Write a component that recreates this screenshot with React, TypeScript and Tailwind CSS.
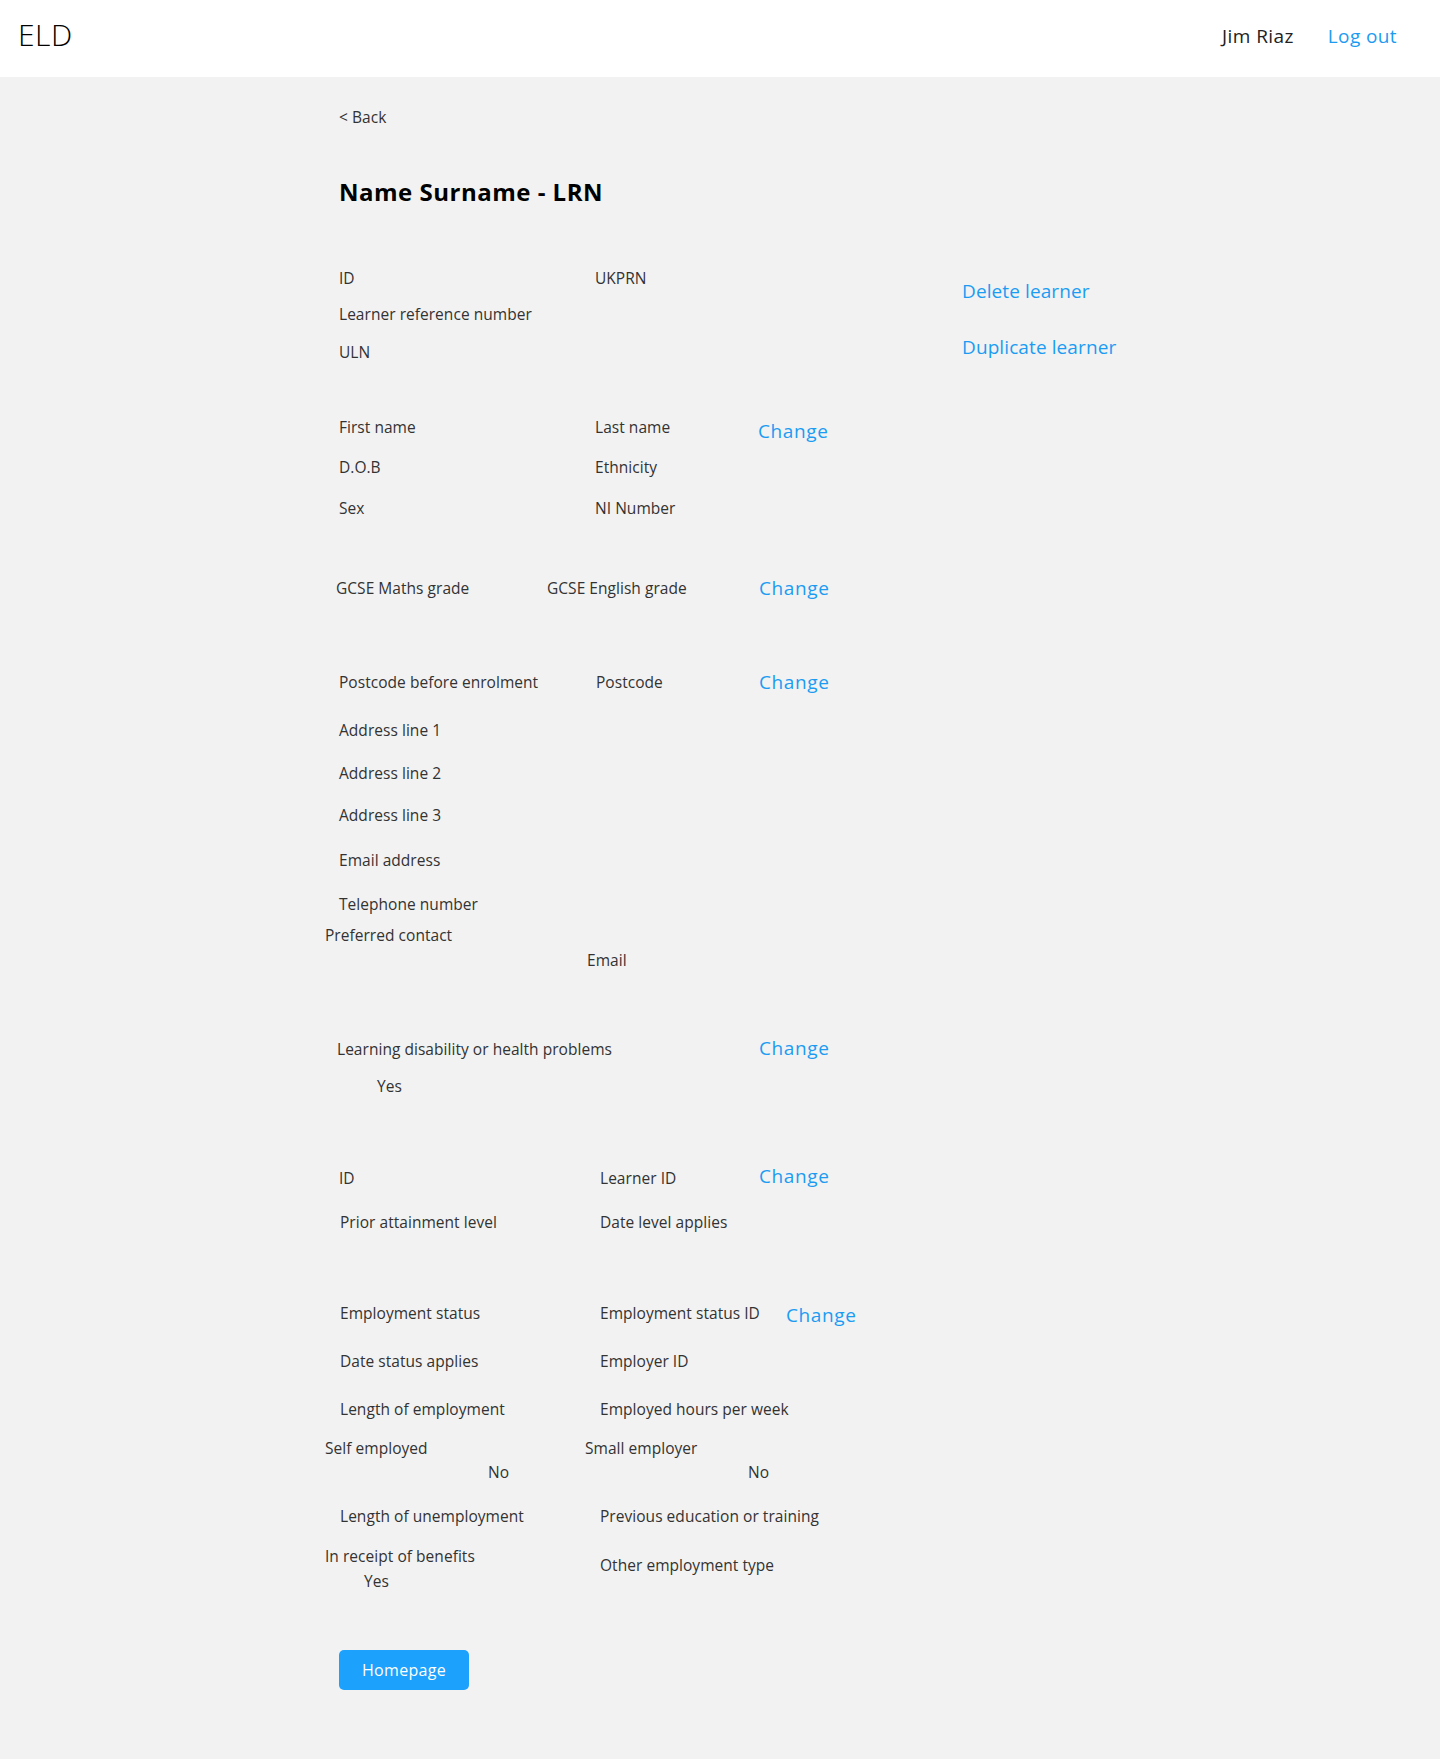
import React from "react";

const F = { fontFamily: '"Open Sans", "Liberation Sans", sans-serif' };

function Change({ mt = 0 }: { mt?: number }) {
  return (
    <a
      className="block shrink-0 whitespace-nowrap text-[19px] leading-[24px] tracking-[0.6px] text-[#1b9cf2]"
      style={{ marginTop: mt }}
    >
      Change
    </a>
  );
}

function T({ children, className = "" }: { children: React.ReactNode; className?: string }) {
  return (
    <span
      className={
        "block shrink-0 whitespace-nowrap text-[15.5px] leading-[20px] tracking-[0.04px] text-[#333333] " + className
      }
    >
      {children}
    </span>
  );
}

export default function App() {
  return (
    <div className="min-h-[1759px] bg-[#f2f2f2]" style={F}>
      <header className="flex h-[77px] items-center justify-between bg-white pl-[18px] pr-[43px]">
        <div className="-mt-[8px] text-[30px] font-light leading-[36px] tracking-[0.5px] text-black">ELD</div>
        <div className="-mt-[5px] flex items-center gap-[34px] text-[19px] leading-[24px] tracking-[0.4px]">
          <span className="text-[#222]">Jim Riaz</span>
          <a className="text-[#1b9cf2]">Log out</a>
        </div>
      </header>

      <main className="pl-[339px] pt-[30px] pb-[69px]">
        <T>&lt; Back</T>
        <h1 className="mt-[49px] text-[24px] font-bold leading-[32px] tracking-[0.5px] text-black">
          Name Surname - LRN
        </h1>

        {/* Block 1 */}
        <div className="mt-[60px] flex">
          <div className="w-[623px]">
            <div className="flex h-[20px] items-start">
              <T className="w-[256px]">ID</T>
              <T>UKPRN</T>
            </div>
            <div className="mt-[16px] flex h-[20px]">
              <T>Learner reference number</T>
            </div>
            <div className="mt-[18px] flex h-[20px]">
              <T>ULN</T>
            </div>
          </div>
          <div className="mt-[11px] flex flex-col gap-[32px] text-[19px] leading-[24px] tracking-[0.1px] text-[#1b9cf2]">
            <a>Delete learner</a>
            <a>Duplicate learner</a>
          </div>
        </div>

        {/* Names */}
        <div className="mt-[55px] flex h-[20px] items-start">
          <T className="w-[256px]">First name</T>
          <T className="w-[163px]">Last name</T>
          <Change mt={2} />
        </div>
        <div className="mt-[20px] flex h-[20px]">
          <T className="w-[256px]">D.O.B</T>
          <T>Ethnicity</T>
        </div>
        <div className="mt-[21px] flex h-[20px]">
          <T className="w-[256px]">Sex</T>
          <T>NI Number</T>
        </div>

        {/* GCSE */}
        <div className="mt-[60px] flex h-[20px] items-start">
          <T className="-ml-[3px] w-[211px]">GCSE Maths grade</T>
          <T className="w-[212px]">GCSE English grade</T>
          <Change mt={-2} />
        </div>

        {/* Address */}
        <div className="mt-[74px] flex h-[20px] items-start">
          <T className="w-[257px]">Postcode before enrolment</T>
          <T className="w-[163px]">Postcode</T>
          <Change mt={-2} />
        </div>
        <div className="mt-[28px] flex h-[20px]">
          <T>Address line 1</T>
        </div>
        <div className="mt-[23px] flex h-[20px]">
          <T>Address line 2</T>
        </div>
        <div className="mt-[22px] flex h-[20px]">
          <T>Address line 3</T>
        </div>
        <div className="mt-[25px] flex h-[20px]">
          <T>Email address</T>
        </div>
        <div className="mt-[24px] flex h-[20px]">
          <T>Telephone number</T>
        </div>
        <div className="mt-[11px] flex h-[20px]">
          <T className="-ml-[14px]">Preferred contact</T>
        </div>
        <div className="mt-[5px] flex h-[20px]">
          <T className="ml-[248px]">Email</T>
        </div>

        {/* Learning disability */}
        <div className="mt-[69px] flex h-[20px] items-start">
          <T className="-ml-[2px] w-[422px]">Learning disability or health problems</T>
          <Change mt={-3} />
        </div>
        <div className="mt-[17px] flex h-[20px]">
          <T className="ml-[38px]">Yes</T>
        </div>

        {/* Prior attainment */}
        <div className="mt-[72px] flex h-[20px] items-start">
          <T className="w-[261px]">ID</T>
          <T className="w-[159px]">Learner ID</T>
          <Change mt={-4} />
        </div>
        <div className="mt-[24px] flex h-[20px]">
          <T className="ml-[1px] w-[260px]">Prior attainment level</T>
          <T>Date level applies</T>
        </div>

        {/* Employment */}
        <div className="mt-[71px] flex h-[20px] items-start">
          <T className="ml-[1px] w-[260px]">Employment status</T>
          <T className="w-[186px]">Employment status ID</T>
          <Change mt={0} />
        </div>
        <div className="mt-[28px] flex h-[20px]">
          <T className="ml-[1px] w-[260px]">Date status applies</T>
          <T>Employer ID</T>
        </div>
        <div className="mt-[28px] flex h-[20px]">
          <T className="ml-[1px] w-[260px]">Length of employment</T>
          <T>Employed hours per week</T>
        </div>
        <div className="mt-[19px] flex h-[20px]">
          <T className="-ml-[14px] w-[260px]">Self employed</T>
          <T>Small employer</T>
        </div>
        <div className="mt-[4px] flex h-[20px]">
          <T className="ml-[149px] w-[260px]">No</T>
          <T>No</T>
        </div>
        <div className="mt-[24px] flex h-[20px]">
          <T className="ml-[1px] w-[260px]">Length of unemployment</T>
          <T>Previous education or training</T>
        </div>
        <div className="mt-[20px] flex h-[20px] items-start">
          <T className="-ml-[14px] w-[275px]">In receipt of benefits</T>
          <T className="mt-[9px]">Other employment type</T>
        </div>
        <div className="mt-[5px] flex h-[20px]">
          <T className="ml-[25px]">Yes</T>
        </div>

        <button className="mt-[59px] flex h-[40px] w-[130px] items-center justify-center rounded-[5px] bg-[#1ca1fc] text-[16px] tracking-[0.3px] text-white">
          Homepage
        </button>
      </main>
    </div>
  );
}
